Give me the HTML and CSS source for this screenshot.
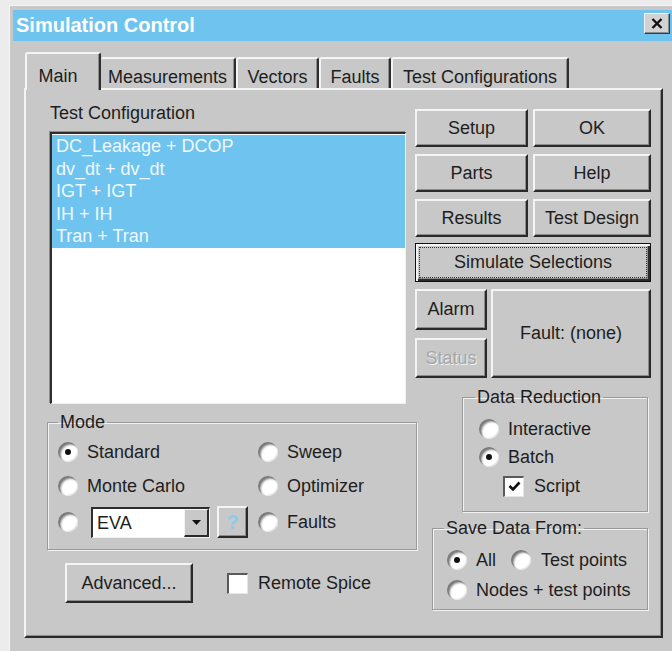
FILE: index.html
```html
<!DOCTYPE html>
<html lang="en">
<head>
<meta charset="utf-8">
<title>Simulation Control</title>
<link rel="stylesheet" href="styles.css">
</head>
<body>
<div class="window">
  <div class="titlebar">
    <span class="title">Simulation Control</span>
    <button class="close" type="button" aria-label="Close">
      <svg width="12" height="11" viewBox="0 0 12 11"><path d="M1.5 1 L10.5 10 M10.5 1 L1.5 10" stroke="#111" stroke-width="2.4" fill="none"/></svg>
    </button>
  </div>

  <div class="tabs">
    <div class="tab tab-main active">Main</div>
    <div class="tab tab-meas">Measurements</div>
    <div class="tab tab-vec">Vectors</div>
    <div class="tab tab-faults">Faults</div>
    <div class="tab tab-tc">Test Configurations</div>
  </div>

  <div class="panel">
    <div class="col-left">
      <div class="caption">Test Configuration</div>
      <div class="listbox">
        <div class="item sel">DC_Leakage + DCOP</div>
        <div class="item sel">dv_dt + dv_dt</div>
        <div class="item sel">IGT + IGT</div>
        <div class="item sel">IH + IH</div>
        <div class="item sel">Tran + Tran</div>
      </div>

      <fieldset class="group mode">
        <legend>Mode</legend>
        <div class="mode-grid">
          <div class="opt r1"><span class="radio on"></span>Standard</div>
          <div class="opt r1"><span class="radio"></span>Sweep</div>
          <div class="opt r2"><span class="radio"></span>Monte Carlo</div>
          <div class="opt r2"><span class="radio"></span>Optimizer</div>
          <div class="opt r3">
            <span class="radio"></span>
            <div class="combo"><span class="combo-text">EVA</span><span class="combo-btn"><svg width="9" height="5" viewBox="0 0 9 5"><path d="M0 0 H9 L4.5 5 Z" fill="#111"/></svg></span></div>
            <button class="btn help-btn" type="button">?</button>
          </div>
          <div class="opt r3"><span class="radio"></span>Faults</div>
        </div>
      </fieldset>

      <div class="bottom-row">
        <button class="btn advanced" type="button">Advanced...</button>
        <span class="check"></span>
        <span class="check-label">Remote Spice</span>
      </div>
    </div>

    <div class="col-right">
      <div class="btn-grid">
        <button class="btn" type="button">Setup</button>
        <button class="btn" type="button">OK</button>
        <button class="btn" type="button">Parts</button>
        <button class="btn" type="button">Help</button>
        <button class="btn" type="button">Results</button>
        <button class="btn" type="button">Test Design</button>
      </div>
      <button class="btn default" type="button"><span class="focus">Simulate Selections</span></button>

      <div class="alarm-grid">
        <button class="btn" type="button">Alarm</button>
        <button class="btn fault" type="button">Fault: (none)</button>
        <button class="btn disabled" type="button">Status</button>
      </div>

      <fieldset class="group reduction">
        <legend>Data Reduction</legend>
        <div class="opt h30"><span class="radio"></span>Interactive</div>
        <div class="opt h26"><span class="radio on"></span>Batch</div>
        <div class="opt h32 indent"><span class="check on"><svg width="13" height="11" viewBox="0 0 13 11"><path d="M1.5 5 L5 8.5 L11.5 1.5" stroke="#111" stroke-width="2.6" fill="none"/></svg></span><span class="check-label">Script</span></div>
      </fieldset>

      <fieldset class="group savedata">
        <legend>Save Data From:</legend>
        <div class="opt h30"><span class="radio on"></span>All<span class="radio spaced"></span>Test points</div>
        <div class="opt h30"><span class="radio"></span>Nodes + test points</div>
      </fieldset>
    </div>
  </div>
</div>
</body>
</html>
```
FILE: styles.css
```css
html, body {
  margin: 0;
  padding: 0;
}

body {
  background: #ececec;
  overflow: hidden;
  font-family: "Liberation Sans", Arial, sans-serif;
  font-size: 18px;
  color: #1e1e1e;
}

/* dialog frame */
.window {
  box-sizing: border-box;
  margin: 5px 0 0 9px;
  width: 672px;
  height: 660px;
  padding: 4px 0 0 3px;
  background: #c8c8c8;
  border-top: 1px solid #f6f6f6;
  border-left: 1px solid #f6f6f6;
}

.titlebar {
  display: flex;
  align-items: flex-start;
  justify-content: space-between;
  width: 660px;
  height: 31px;
  background: #6ec4ee;
}

.title {
  padding-left: 3px;
  line-height: 31px;
  font-weight: bold;
  font-size: 20px;
  color: #ffffff;
}

.close {
  box-sizing: border-box;
  width: 26px;
  height: 21px;
  margin: 3px 3px 0 0;
  padding: 0;
  display: flex;
  align-items: center;
  justify-content: center;
  background: #d2d2d2;
  border: 1px solid;
  border-color: #f4f4f4 #3a3a3a #3a3a3a #f4f4f4;
  box-shadow: inset -1px -1px #8c8c8c;
}

/* tab strip */
.tabs {
  position: relative;
  z-index: 1;
  display: flex;
  align-items: flex-end;
  height: 49px;
  margin: 0 0 -2px 12px;
}

.tab {
  box-sizing: border-box;
  height: 31px;
  margin-bottom: 2px;
  padding-top: 7px;
  line-height: 22px;
  text-align: center;
  white-space: nowrap;
  background: #c8c8c8;
  border-top: 2px solid #f4f4f4;
  border-left: 2px solid #f4f4f4;
  border-right: 2px solid #2e2e2e;
  border-radius: 3px 3px 0 0;
  box-shadow: inset -1px 0 #8c8c8c;
}

.tab.active {
  height: 38px;
  margin-bottom: 0;
  padding-top: 11px;
  padding-right: 10px;
}

.tab-main   { width: 76px; }
.tab-meas   { width: 135px; border-left: none; }
.tab-vec    { width: 83px; }
.tab-faults { width: 72px; }
.tab-tc     { width: 178px; }

/* page under the tabs */
.panel {
  box-sizing: border-box;
  display: grid;
  grid-template-columns: 368px 236px;
  align-items: start;
  width: 639px;
  height: 550px;
  margin-left: 11px;
  padding: 12px 0 0 21px;
  border-top: 2px solid #f4f4f4;
  border-left: 2px solid #f4f4f4;
  border-right: 2px solid #2a2a2a;
  border-bottom: 2px solid #2a2a2a;
  box-shadow: inset -1px -1px #8c8c8c;
}

.col-left {
  display: flex;
  flex-direction: column;
}

.caption {
  margin-left: 3px;
  line-height: 22px;
}

.listbox {
  box-sizing: border-box;
  width: 356px;
  height: 272px;
  margin: 8px 0 0 3px;
  padding-top: 1px;
  background: #ffffff;
  border-top: 2px solid #2e2e2e;
  border-left: 2px solid #2e2e2e;
  border-right: 1px solid #f0f0f0;
  border-bottom: 1px solid #f0f0f0;
  box-shadow: -1px -1px #8c8c8c;
}

.item {
  height: 22.5px;
  line-height: 22.5px;
  padding-left: 4px;
  white-space: nowrap;
}

.item.sel {
  background: #6ec4ee;
  color: #eef8ff;
}

/* etched group boxes */
.group {
  box-sizing: border-box;
  margin: 0;
  padding: 0;
  border: 1px solid #9a9a9a;
  box-shadow: inset 1px 1px #f2f2f2, 1px 1px #f2f2f2;
  min-width: 0;
}

.group legend {
  padding: 0 2px;
  line-height: 20px;
}

.mode {
  width: 370px;
  margin-top: 8px;
}

.mode legend {
  margin-left: 10px;
}

.mode-grid {
  display: grid;
  grid-template-columns: 200px auto;
  grid-template-rows: 34px 34px 38px;
  padding: 3px 0 8px 10px;
}

.opt {
  display: flex;
  align-items: center;
  white-space: nowrap;
}

.h26 { height: 26px; }
.h30 { height: 30px; }
.h32 { height: 32px; }

.radio {
  position: relative;
  flex: none;
  width: 20px;
  height: 20px;
  margin-right: 9px;
  border-radius: 50%;
  background: #ffffff;
  box-shadow: inset 2px 2px 1px #7c7c7c, inset 3px 3px 2px #b0b0b0, inset -1px -1px 0 #e4e4e4;
}

.radio.on::after {
  content: "";
  position: absolute;
  left: 7px;
  top: 7px;
  width: 6px;
  height: 6px;
  border-radius: 50%;
  background: #111;
}

.radio.spaced {
  margin-left: 15px;
  margin-right: 10px;
}

.combo {
  box-sizing: border-box;
  display: flex;
  width: 119px;
  height: 31px;
  margin-left: 4px;
  background: #ffffff;
  border-top: 2px solid #2e2e2e;
  border-left: 2px solid #2e2e2e;
  border-right: 1px solid #f0f0f0;
  border-bottom: 1px solid #f0f0f0;
}

.combo-text {
  flex: 1;
  padding-left: 4px;
  line-height: 28px;
}

.combo-btn {
  box-sizing: border-box;
  width: 25px;
  display: flex;
  align-items: center;
  justify-content: center;
  background: #c8c8c8;
  border-top: 1px solid #f4f4f4;
  border-left: 1px solid #f4f4f4;
  border-right: 2px solid #2a2a2a;
  border-bottom: 2px solid #2a2a2a;
}

/* raised push buttons */
.btn {
  box-sizing: border-box;
  margin: 0;
  padding: 0;
  font: inherit;
  color: #1e1e1e;
  background: #c8c8c8;
  border-top: 2px solid #f4f4f4;
  border-left: 2px solid #f4f4f4;
  border-right: 2px solid #2a2a2a;
  border-bottom: 2px solid #2a2a2a;
  box-shadow: inset -1px -1px #8c8c8c;
  white-space: nowrap;
}

.help-btn {
  width: 31px;
  height: 32px;
  margin-left: 7px;
  font-weight: bold;
  font-size: 20px;
  color: #8ccbec;
}

.bottom-row {
  display: flex;
  align-items: center;
  margin-top: 13px;
}

.advanced {
  width: 128px;
  height: 40px;
  margin-left: 18px;
}

.check {
  box-sizing: border-box;
  flex: none;
  display: flex;
  align-items: center;
  justify-content: center;
  width: 21px;
  height: 21px;
  background: #ffffff;
  border-top: 2px solid #5a5a5a;
  border-left: 2px solid #5a5a5a;
  border-right: 1px solid #e6e6e6;
  border-bottom: 1px solid #e6e6e6;
}

.bottom-row .check {
  margin-left: 34px;
}

.check-label {
  margin-left: 10px;
}

.indent {
  padding-left: 24px;
}

/* right column */
.col-right {
  display: flex;
  flex-direction: column;
  margin-top: 7px;
}

.btn-grid {
  display: grid;
  grid-template-columns: 113px 118px;
  grid-auto-rows: 38px;
  column-gap: 5px;
  row-gap: 7px;
}

.default {
  height: 39px;
  margin-top: 6px;
  padding: 3px;
  border: 1px solid #111;
  box-shadow: inset 2px 2px #f4f4f4, inset -2px -2px #2a2a2a, inset -3px -3px #8c8c8c;
}

.focus {
  display: block;
  height: 100%;
  box-sizing: border-box;
  border: 1px dotted #333;
  line-height: 29px;
}

.alarm-grid {
  display: grid;
  grid-template-columns: 72px 160px;
  grid-template-rows: 41px 40px;
  column-gap: 4px;
  row-gap: 8px;
  margin-top: 7px;
}

.fault {
  grid-column: 2;
  grid-row: 1 / span 2;
}

.disabled {
  color: #a6a6a6;
  text-shadow: 1px 1px 0 #f2f2f2;
}

.reduction {
  width: 186px;
  margin: 9px 0 0 47px;
  padding: 7px 0 9px 16px;
}

.reduction legend {
  margin-left: -4px;
}

.savedata {
  width: 216px;
  margin: 6px 0 0 17px;
  padding: 7px 0 4px 14px;
}

.savedata legend {
  margin-left: -3px;
}
```
